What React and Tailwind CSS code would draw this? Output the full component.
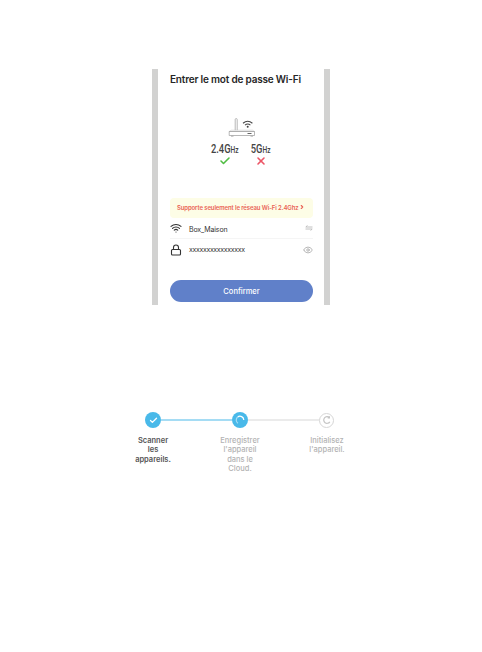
import React from 'react';
import { Check, ChevronRight, Eye, Lock, Wifi, X } from 'lucide-react';

const RouterDrawing = () => (
  <svg viewBox="0 0 28 20" className="block h-5 w-7" fill="none" stroke="#999" strokeWidth="0.7">
    <path d="M7.200 13.200V2.500q0-.9 1-.9t1 .9v10.700" />
    <path d="M3.500 13.200h21l2 1.300H1.200z" stroke="#bbb" strokeWidth="0.5" />
    <path d="M1.200 14.500h25.300v4H1.200z" />
    <path d="M3 19.200h2.500M22.500 19.200H25" stroke="#999" />
    <path d="M19.500 16.500h4" stroke="#555" strokeWidth="0.9" />
    <g stroke="#444" strokeWidth="1.100">
      <path d="M15 6.200q4.700-3.800 9.400 0" />
      <path d="M17 8.100q2.700-2.100 5.400 0" />
    </g>
    <circle cx="19.700" cy="9.700" r="1" fill="#444" stroke="none" />
  </svg>
);

const Band = ({ value, supported }) => (
  <div className="flex w-[36px] flex-col items-center">
    <div className="flex h-[13px] origin-center scale-x-[0.78] items-baseline whitespace-nowrap font-['Roboto',sans-serif] leading-[13px] text-[#444]">
      <span className="text-[12px] font-medium leading-[13px]">{value}</span>
      <span className="text-[8.5px] font-medium leading-[13px]">Hz</span>
    </div>
    {supported ? (
      <Check className="-mt-px h-[12px] w-[12px] text-[#50bd43]" strokeWidth={3.2} />
    ) : (
      <X className="-mt-px h-[12px] w-[12px] text-[#ec5566]" strokeWidth={3.2} />
    )}
  </div>
);

const PhoneScreen = () => (
  <div className="flex h-[236px] w-[178px] flex-col border-x-[6px] border-[#d2d2d1] bg-white pl-[12px] pr-[11px]">
    <h1 className="mt-[3px] h-[14px] whitespace-nowrap text-[10px] font-semibold leading-[14px] tracking-[-0.19px] text-[#262626]">
      Entrer le mot de passe Wi-Fi
    </h1>

    <div className="mt-[31px] flex justify-center">
      <RouterDrawing />
    </div>
    <div className="ml-[37px] mt-[6px] flex">
      <Band value="2.4G" supported />
      <Band value="5G" />
    </div>

    <div className="mt-[31px] flex h-[20px] shrink-0 items-center rounded-[4px] bg-[#fdfde6] pb-[2px] pl-[7px] text-[6px] font-semibold tracking-[-0.12px] text-[#ea6355]">
      <span className="whitespace-nowrap">Supporte seulement le réseau Wi-Fi 2.4Ghz</span>
      <ChevronRight className="h-[6px] w-[6px] shrink-0" strokeWidth={4.5} />
    </div>

    <div className="flex h-[21px] shrink-0 items-center border-b border-[#f5f5f5]">
      <Wifi className="h-[12px] w-[12px] text-[#333]" strokeWidth={2.2} />
      <span className="ml-[7px] mt-[4px] flex-1 text-[7px] tracking-[-0.14px] text-[#333]">Box_Maison</span>
      <svg viewBox="0 0 8 6" className="h-[6px] w-[8px]" fill="none" stroke="#b0b0b0" strokeWidth="0.8">
        <path d="M7.500 2H.8L2.500.4M.5 4h6.700L5.500 5.600" />
      </svg>
    </div>
    <div className="flex h-[21px] shrink-0 items-center">
      <Lock className="h-[12px] w-[12px] text-[#333]" strokeWidth={2.2} />
      <span className="ml-[7px] mt-[2px] flex-1 text-[7px] tracking-[-0.34px] text-[#333]">xxxxxxxxxxxxxxxx</span>
      <Eye className="h-[10px] w-[10px] text-[#aaa]" strokeWidth={2} />
    </div>

    <button className="mt-[20px] h-[22px] shrink-0 rounded-full bg-[#6080c9] pt-px text-[7.5px] font-medium text-white">
      Confirmer
    </button>
  </div>
);

const Arc = () => (
  <svg viewBox="0 0 10 10" className="h-[10px] w-[10px]" fill="none" stroke="currentColor" strokeWidth="1.200">
    <path d="M7.300 2.600A3.300 3.300 0 1 0 7.800 6.800M7.400 1.200v1.800h-1.700" />
  </svg>
);

const Spinner = () => (
  <svg viewBox="0 0 10 10" className="h-[10px] w-[10px]" fill="none" strokeWidth="1.200">
    <path d="M2.700 2A3.800 3.800 0 0 1 8.800 5" stroke="#fff" />
    <path d="M2.700 2A3.800 3.800 0 0 0 3 8.200" stroke="#a4dcf5" />
  </svg>
);

const Steps = () => (
  <div className="w-[234px]">
    <div className="flex h-[16px] items-center pl-[22px] pr-[23px]">
      <div className="flex h-[16px] w-[16px] shrink-0 items-center justify-center rounded-full bg-[#49b9e9]">
        <Check className="h-[9px] w-[9px] text-white" strokeWidth={3.5} />
      </div>
      <div className="h-[2px] flex-1 bg-[#a5dcf4]" />
      <div className="flex h-[16px] w-[16px] shrink-0 items-center justify-center rounded-full bg-[#49b9e9]">
        <Spinner />
      </div>
      <div className="h-[2px] flex-1 bg-[#ebebeb]" />
      <div className="flex h-[15px] w-[15px] shrink-0 items-center justify-center rounded-full border border-[#d6d6d6] text-[#c4c4c4]">
        <Arc />
      </div>
    </div>
    <div className="mt-[8px] flex justify-between text-center text-[7.5px] font-medium leading-[9.3px] text-[#b3b3b3]">
      <p className="w-[60px] font-semibold text-[#555]">Scanner<br />les<br />appareils.</p>
      <p className="w-[60px]">Enregistrer<br />l'appareil<br />dans le<br />Cloud.</p>
      <p className="w-[60px]">Initialisez<br />l'appareil.</p>
    </div>
  </div>
);

const App = () => (
  <main className="flex h-screen flex-col overflow-hidden bg-white pt-[69px] font-['Inter',sans-serif]">
    <div className="ml-[152px]">
      <PhoneScreen />
    </div>
    <div className="ml-[123px] mt-[107px]">
      <Steps />
    </div>
  </main>
);

export default App;
